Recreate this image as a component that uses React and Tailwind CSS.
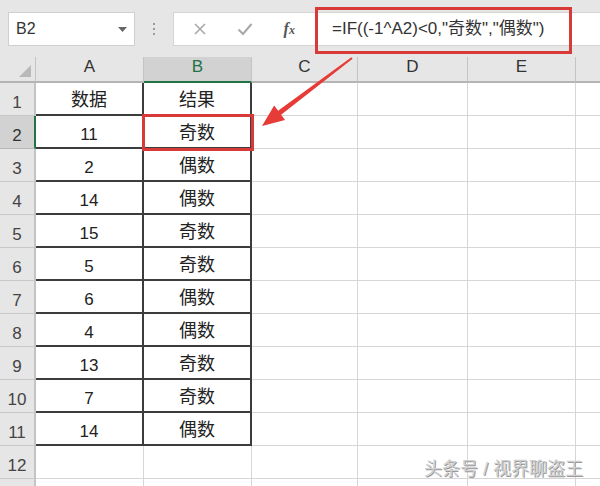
import React from "react";

const FONT = { fontFamily: '"Liberation Sans", "Noto Sans CJK SC", sans-serif' };

const colA = ["数据", "11", "2", "14", "15", "5", "6", "4", "13", "7", "14"];
const colB = ["结果", "奇数", "偶数", "偶数", "奇数", "奇数", "偶数", "偶数", "奇数", "奇数", "偶数"];

const isCJK = (s) => /[\u4e00-\u9fff]/.test(s);

function DataCell({ value, width }) {
  return (
    <div
      className={`${width} h-full shrink-0 flex items-end justify-center pb-0 border-r-2 border-b-2 border-[#3c3c3c] text-[#222] ${
        value && isCJK(value) ? "text-[18px]" : "text-[17px]"
      }`}
    >
      {value}
    </div>
  );
}

function GridCell({ width, last }) {
  return (
    <div
      className={`${width} h-full shrink-0 ${last ? "" : "border-r"} border-b border-[#d6d6d6]`}
    />
  );
}

function Row({ n, a, b, selected, hasData }) {
  return (
    <div className="flex h-[33px] shrink-0">
      <div
        className={`w-[36px] h-full shrink-0 flex items-end justify-center pb-0 text-[17px] border-b ${
          selected
            ? "bg-[#d2d2d2] border-r-2 border-r-[#217346] border-b-[#b8b8b8] text-[#333]"
            : "bg-[#e6e6e6] border-r-2 border-r-[#c4c4c4] border-b-[#c8c8c8] text-[#444]"
        }`}
      >
        {n}
      </div>
      {hasData ? (
        <>
          <DataCell value={a} width="w-[108px]" />
          <DataCell value={b} width="w-[108px]" />
        </>
      ) : (
        <>
          <GridCell width="w-[108px]" />
          <GridCell width="w-[108px]" />
        </>
      )}
      <GridCell width="w-[106px]" />
      <GridCell width="w-[110px]" />
      <GridCell width="w-[108px]" />
      <GridCell width="w-[24px]" last />
    </div>
  );
}

function HeaderCell({ label, width, selected, last }) {
  return (
    <div
      className={`${width} h-full shrink-0 flex items-end justify-center pb-[2px] text-[17px] ${
        last ? "" : "border-r border-r-[#c4c4c4]"
      } ${
        selected
          ? "bg-[#d2d2d2] text-[#217346] border-b-2 border-b-[#217346]"
          : "bg-[#e6e6e6] text-[#333] border-b-2 border-b-[#b4b4b4]"
      }`}
    >
      {label}
    </div>
  );
}

export default function App() {
  const rows = [];
  for (let i = 0; i < 13; i++) {
    rows.push(
      <Row
        key={i}
        n={i < 12 ? i + 1 : ""}
        a={colA[i]}
        b={colB[i]}
        selected={i === 1}
        hasData={i < 11}
      />
    );
  }

  return (
    <div className="relative w-[600px] h-[486px] overflow-hidden bg-white flex flex-col" style={FONT}>
      {/* Toolbar */}
      <div className="h-[57px] shrink-0 bg-[#e6e6e6] flex items-start pt-[12px]">
        <div className="ml-[8px] w-[127px] h-[34px] bg-white border border-[#cfcfcf] flex items-center justify-between pl-[7px] pr-[7px]">
          <span className="text-[16px] text-[#333]">B2</span>
          <svg width="9" height="5" viewBox="0 0 9 5">
            <polygon points="0,0 9,0 4.5,5" fill="#666" />
          </svg>
        </div>
        <div className="w-[38px] h-[34px] flex flex-col items-center justify-center gap-[3px]">
          <span className="w-[2px] h-[2px] bg-[#9a9a9a]" />
          <span className="w-[2px] h-[2px] bg-[#9a9a9a]" />
          <span className="w-[2px] h-[2px] bg-[#9a9a9a]" />
        </div>
        <div className="flex-1 h-[34px] bg-white border-l border-y border-[#d4d4d4] flex items-center">
          <div className="w-[140px] flex items-center justify-around pl-[4px] pr-[4px] shrink-0">
            <svg width="14" height="14" viewBox="0 0 14 14">
              <path d="M2 2 L12 12 M12 2 L2 12" stroke="#a8a8a8" strokeWidth="1.6" />
            </svg>
            <svg width="16" height="14" viewBox="0 0 16 14">
              <path d="M1.5 7.5 L6 12 L14.5 2" stroke="#a8a8a8" strokeWidth="2" fill="none" />
            </svg>
            <span
              className="text-[16px] italic text-[#555] font-bold"
              style={{ fontFamily: '"Liberation Serif", serif' }}
            >
              f<span className="text-[12px]">x</span>
            </span>
          </div>
          <div className="pl-[18px] text-[17px] text-[#333] whitespace-nowrap">
            =IF((-1^A2)&lt;0,"奇数","偶数")
          </div>
        </div>
      </div>

      {/* Column header */}
      <div className="flex h-[26px] shrink-0">
        <div className="w-[36px] h-full shrink-0 bg-[#e6e6e6] border-r border-r-[#c4c4c4] border-b-2 border-b-[#b4b4b4] flex items-end justify-end pr-[4px] pb-[4px]">
          <svg width="12" height="12" viewBox="0 0 12 12">
            <polygon points="12,0 12,12 0,12" fill="#b9b9b9" />
          </svg>
        </div>
        <HeaderCell label="A" width="w-[108px]" />
        <HeaderCell label="B" width="w-[108px]" selected />
        <HeaderCell label="C" width="w-[106px]" />
        <HeaderCell label="D" width="w-[110px]" />
        <HeaderCell label="E" width="w-[108px]" />
        <HeaderCell label="" width="w-[24px]" last />
      </div>

      {/* Rows */}
      <div className="flex flex-col">{rows}</div>

      {/* Red highlight around formula */}
      <div className="absolute left-[315px] top-[7px] w-[257px] h-[47px] border-[3px] border-[#d83a3a]" />
      {/* Red highlight around B2 */}
      <div className="absolute left-[142px] top-[114px] w-[112px] h-[37px] border-[3px] border-[#d83a3a]" />

      {/* Arrow */}
      <svg className="absolute left-0 top-0 pointer-events-none" width="600" height="486" viewBox="0 0 600 486">
        <polygon
          points="262,126 285,120 281.1,114.7 352.6,58.8 351.4,57.2 278.1,110.7 274.2,105.5"
          fill="#e63b36"
        />
      </svg>

      {/* Watermark */}
      <div
        className="absolute left-[424px] top-[456px] text-[18px] text-[#d0d0d0] whitespace-nowrap"
        style={{ textShadow: "1px 1px 0 #999" }}
      >
        头条号 / 视界聊盗王
      </div>
    </div>
  );
}
